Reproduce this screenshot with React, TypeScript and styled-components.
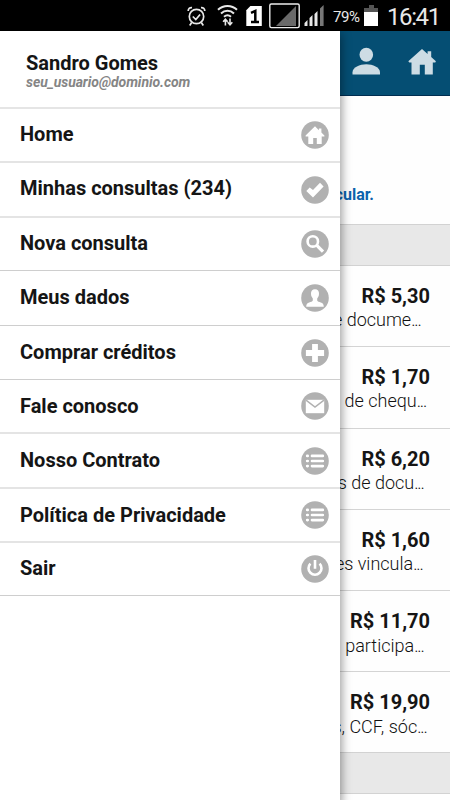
import React from "react";
import styled, { createGlobalStyle } from "styled-components";

const GlobalStyle = createGlobalStyle`
  * { box-sizing: border-box; }
  body { margin: 0; font-family: Roboto, "Liberation Sans", sans-serif; background: #fff; color: #151515; }
`;

const Screen = styled.div`
  position: relative;
  width: 450px;
  height: 800px;
  overflow: hidden;
  background: #fefefe;
  display: flex;
  flex-direction: column;
`;

const StatusBar = styled.div`
  height: 31px;
  flex: none;
  background: #000;
  color: #e8e8e8;
  display: flex;
  justify-content: flex-end;
  align-items: center;
  padding-right: 9px;
`;

const StatusIcons = styled.svg`
  width: 148px;
  height: 31px;
  margin-right: 2px;
  flex: none;
`;

const Battery = styled.svg`
  width: 14px;
  height: 21px;
  flex: none;
  margin: 0 9px 0 3px;
`;

const Percent = styled.span`
  width: 28px;
  font-size: 15px;
  letter-spacing: -0.45px;
  line-height: 31px;
  padding-top: 3px;
  white-space: nowrap;
`;

const Clock = styled.span`
  width: 54px;
  font-size: 24px;
  font-weight: 400;
  line-height: 31px;
  padding-top: 3px;
  letter-spacing: -1.4px;
  white-space: nowrap;
`;

const Page = styled.main`
  flex: 1;
  display: flex;
  flex-direction: column;
`;

const AppBar = styled.header`
  height: 65px;
  flex: none;
  background: #054e73;
  border-bottom: 1px solid #012d50;
  display: flex;
  justify-content: flex-end;
  align-items: center;
  gap: 28px;
  padding: 0 14px 4px 0;
`;

const BarIcon = styled.svg`
  width: 28px;
  height: 28px;
  fill: #cddce4;
`;

const Notice = styled.div`
  height: 128px;
  flex: none;
  display: flex;
  justify-content: flex-end;
  align-items: flex-end;
  padding: 0 76px 18px 0;
  font-size: 16px;
  font-weight: 700;
  line-height: 22px;
  color: #0b62ac;
`;

const SectionBand = styled.div<{ $height: number }>`
  height: ${(p) => p.$height}px;
  flex: none;
  background: #e8e8e8;
  border-top: 1px solid #d2d2d2;
  border-bottom: 1px solid #d2d2d2;
`;

const Product = styled.article<{ $height: number; $last?: boolean }>`
  height: ${(p) => p.$height}px;
  flex: none;
  padding: 18px 20px 0 0;
  text-align: right;
  border-bottom: ${(p) => (p.$last ? "0" : "1px solid #d4d4d4")};
`;

const Price = styled.div`
  font-size: 20px;
  font-weight: 700;
  line-height: 24px;
`;

const Summary = styled.div<{ $inset: number; $drop: number }>`
  font-size: 18px;
  font-weight: 300;
  line-height: 24px;
  padding: ${(p) => p.$drop}px ${(p) => p.$inset}px 0 0;
  color: #111;
  white-space: nowrap;
`;

const Dots = styled.span`
  letter-spacing: -1.2px;
`;

const Drawer = styled.aside`
  position: absolute;
  left: 0;
  top: 31px;
  bottom: 0;
  width: 340px;
  background: #fff;
  box-shadow: 0 5px 9px 2px rgba(0, 0, 0, 0.38);
  clip-path: inset(0 -20px 0 0);
  display: flex;
  flex-direction: column;
`;

const Profile = styled.div`
  height: 78px;
  flex: none;
  padding: 20px 0 0 26px;
  border-bottom: 2px solid #e5e5e5;
`;

const Name = styled.div`
  font-size: 20px;
  font-weight: 700;
  line-height: 24px;
`;

const Email = styled.div`
  font-size: 14px;
  font-weight: 700;
  font-style: italic;
  line-height: 14px;
  letter-spacing: -0.07px;
  color: #858585;
`;

const MenuRow = styled.a<{ $height: number; $soft: boolean }>`
  height: ${(p) => p.$height}px;
  flex: none;
  display: flex;
  align-items: center;
  justify-content: space-between;
  padding: 0 11px 0 20px;
  border-bottom: ${(p) => (p.$soft ? "2px solid #e4e4e4" : "1px solid #cecece")};
`;

const Label = styled.span<{ $lift: number }>`
  font-size: 20px;
  font-weight: 700;
  line-height: 24px;
  padding-bottom: ${(p) => p.$lift}px;
  white-space: nowrap;
`;

const RoundIcon = styled.svg`
  width: 28px;
  height: 28px;
  flex: none;
`;

type Glyph = "home" | "check" | "search" | "person" | "plus" | "mail" | "list" | "power";

const line = { fill: "none", stroke: "#fff" } as const;

const glyphs: Record<Glyph, React.ReactNode> = {
  home: <path fill="#fff" d="M14 5.3 4.6 14.6v.8h2.7v7.7h4.9v-6h3.6v6h4.9v-7.7h2.7v-.8l-3-3V7.4h-2.5v1.8z" />,
  check: <path fill="#fff" d="m5.3 15.1 3.4-3.6 3.3 2.6 7-7.3 3.6 3.6L12 21.6z" />,
  search: (
    <g {...line}>
      <circle cx="11.8" cy="11.4" r="5.2" strokeWidth="2.6" />
      <path strokeWidth="3.2" d="m15.8 15.4 6.2 6.2" />
    </g>
  ),
  person: (
    <path fill="#fff" d="M14 5.2c-2.7 0-4.2 1.9-4 4.6.1 1.2.1 2 .6 2.8.4.9.7 1.3 1.2 1.8v2.1c-.4 1-2 1.4-3.6 2-1.8.6-2.9 1.6-3 4.2h17.6c-.1-2.6-1.2-3.6-3-4.2-1.6-.6-3.2-1-3.6-2v-2.1c.5-.5.8-.9 1.2-1.8.5-.8.5-1.6.6-2.8.2-2.7-1.3-4.6-4-4.6z" />
  ),
  plus: <path stroke="#fff" strokeWidth="5.8" d="M14 4.9v18.2M4.9 14h18.2" />,
  mail: (
    <>
      <path fill="#fff" d="M4.8 7.8h18.4v13.4H4.8z" />
      <path fill="none" stroke="#b1b1b1" strokeWidth="1.5" d="m5 8.1 9 7 9-7" />
    </>
  ),
  list: (
    <g {...line} strokeWidth="2.7" strokeLinecap="round">
      <path d="M11 8.9h10.8M11 14h10.8M11 19.1h10.8M6.2 8.9h.5M6.2 14h.5M6.2 19.1h.5" />
    </g>
  ),
  power: (
    <g {...line} strokeWidth="2.6">
      <path d="M9.4 8.6a6.5 6.5 0 1 0 9.2 0M14 4.9v8.8" />
    </g>
  ),
};

const menu: { label: string; glyph: Glyph; height: number; soft: boolean; lift: number }[] = [
  { label: "Home", glyph: "home", height: 54, soft: true, lift: 3 },
  { label: "Minhas consultas (234)", glyph: "check", height: 55, soft: true, lift: 3 },
  { label: "Nova consulta", glyph: "search", height: 53, soft: false, lift: 3 },
  { label: "Meus dados", glyph: "person", height: 55, soft: false, lift: 3 },
  { label: "Comprar créditos", glyph: "plus", height: 54, soft: false, lift: 1 },
  { label: "Fale conosco", glyph: "mail", height: 54, soft: true, lift: 1 },
  { label: "Nosso Contrato", glyph: "list", height: 55, soft: true, lift: 1 },
  { label: "Política de Privacidade", glyph: "list", height: 54, soft: true, lift: 1 },
  { label: "Sair", glyph: "power", height: 53, soft: false, lift: 3 },
];

const products = [
  { price: "R$ 5,30", summary: "e docume", inset: 9.5, drop: 0, height: 81 },
  { price: "R$ 1,70", summary: "de chequ", inset: 4, drop: 0, height: 82 },
  { price: "R$ 6,20", summary: "s de docu", inset: 6.5, drop: 0, height: 81 },
  { price: "R$ 1,60", summary: "es vincula", inset: 7.5, drop: 0, height: 81 },
  { price: "R$ 11,70", summary: "participa", inset: 6.5, drop: 1, height: 81 },
  { price: "R$ 19,90", summary: "s, CCF, sóc", inset: 3.5, drop: 1, height: 80 },
];

export default function App() {
  return (
    <Screen>
      <GlobalStyle />
      <StatusBar>
        <StatusIcons viewBox="0 0 148 31">
          <g fill="none" stroke="#e8e8e8" strokeWidth="1.7">
            <circle cx="13.5" cy="16.5" r="7.2" />
            <path d="m9.8 16.5 3 3 4.3-5M5.2 11c0-2.2 1.4-3.6 3.8-3.4M21.8 11c0-2.2-1.4-3.6-3.8-3.4M8.7 22.5l-2 3M18.3 22.5l2 3" />
            <path strokeWidth="2" d="M35 9.8c5.4-5.2 13.6-5.2 19 0M38 13.4c3.8-3.6 9.2-3.6 13 0M41 16.8c2.2-1.9 4.8-1.9 7 0" />
            <path strokeWidth="1.6" d="M42.4 25.5v-6m-2.3 2.3 2.3-2.5 2.3 2.5M47 18.5v6m-2.3-2.3 2.3 2.5 2.3-2.5" />
          </g>
          <path fill="#fff" d="M67.4 6h11.4v20H63.3V10.3z" />
          <path fill="none" stroke="#000" strokeWidth="2.5" d="M68 12.8 72.3 11v11M68 22h8" />
          <rect x="86.8" y="4" width="29.4" height="23.6" rx="1.5" fill="none" stroke="#ededed" strokeWidth="1.4" />
          <path fill="#6a6a6a" d="M93 26 113 6v20z" />
          <path fill="#e8e8e8" d="M121.5 26v-3l3-3v6zM126.5 26v-8l3-3v11zM131.5 26V14l3-3v15z" />
          <path fill="#777" d="M137 26V8.5l3.6-3.4V26z" />
        </StatusIcons>
        <Percent>79%</Percent>
        <Battery viewBox="0 0 14 21">
          <path fill="#555" d="M5 0h5v3h4v18H0V3h5z" />
          <path fill="#fff" d="M0 7h14v14H0z" />
        </Battery>
        <Clock>16:41</Clock>
      </StatusBar>
      <Page>
        <AppBar>
          <BarIcon viewBox="0 0 28 28">
            <ellipse cx="14.3" cy="7.7" rx="6.8" ry="7" />
            <path d="M.5 27.5v-2.2C.5 20.4 7.8 17.3 14.3 17.3S28 20.4 28 25.3v2.2z" />
          </BarIcon>
          <BarIcon viewBox="0 0 28 28">
            <path d="M14 2 .3 14.2l1 1.2H3.5v12h8.3v-9.6h5v9.6h8v-12h2.5l.6-1.2-4.7-4.1V4.3h-3.6v2.6z" />
          </BarIcon>
        </AppBar>
        <Notice>particular.</Notice>
        <SectionBand $height={42} />
        {products.map((p, i) => (
          <Product key={p.price} $height={p.height} $last={i === products.length - 1}>
            <Price>{p.price}</Price>
            <Summary $inset={p.inset} $drop={p.drop}>
              {p.summary}
              <Dots>...</Dots>
            </Summary>
          </Product>
        ))}
        <SectionBand $height={42} />
      </Page>
      <Drawer>
        <Profile>
          <Name>Sandro Gomes</Name>
          <Email>seu_usuario@dominio.com</Email>
        </Profile>
        {menu.map((m) => (
          <MenuRow key={m.label} $height={m.height} $soft={m.soft}>
            <Label $lift={m.lift}>{m.label}</Label>
            <RoundIcon viewBox="0 0 28 28">
              <circle cx="14" cy="14" r="13.8" fill="#b1b1b1" />
              {glyphs[m.glyph]}
            </RoundIcon>
          </MenuRow>
        ))}
      </Drawer>
    </Screen>
  );
}
